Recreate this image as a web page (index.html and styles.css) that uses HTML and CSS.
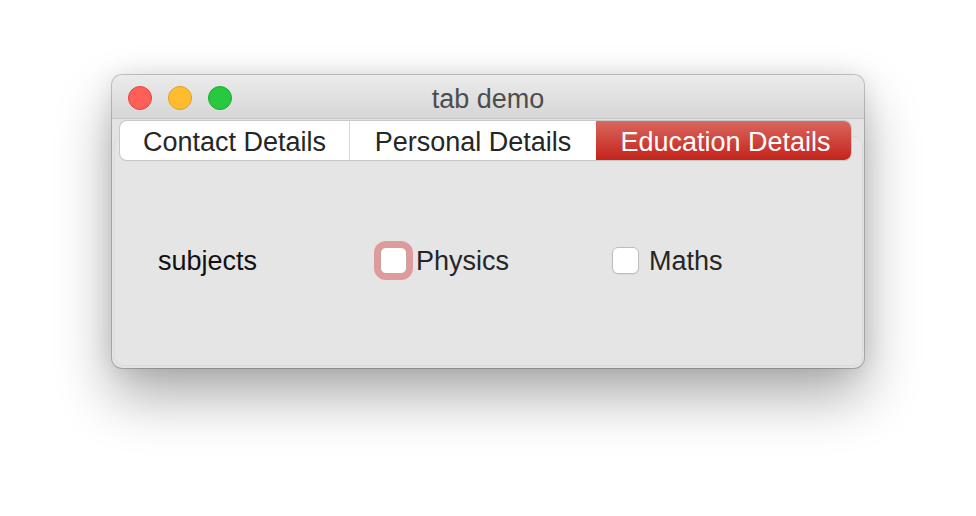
FILE: index.html
```html
<!DOCTYPE html>
<html>
<head>
<meta charset="utf-8">
<link rel="stylesheet" href="styles.css">
</head>
<body>
<div class="window">
  <div class="titlebar">
    <div class="lights">
      <span class="light red"></span>
      <span class="light yellow"></span>
      <span class="light green"></span>
    </div>
    <div class="title">tab demo</div>
  </div>
  <div class="content">
    <div class="pane"></div>
    <div class="tabs">
      <div class="tab tab-contact">Contact Details</div>
      <div class="tab tab-personal">Personal Details</div>
      <div class="tab tab-education active">Education Details</div>
    </div>
    <div class="row">
      <div class="label">subjects</div>
      <label class="check check-physics"><span class="box focused"></span><span class="text">Physics</span></label>
      <label class="check"><span class="box"></span><span class="text">Maths</span></label>
    </div>
  </div>
</div>
</body>
</html>
```
FILE: styles.css
```css
html, body {
  margin: 0;
  padding: 0;
}
body {
  width: 976px;
  height: 516px;
  background: #ffffff;
  font-family: "Liberation Sans", Arial, sans-serif;
  overflow: hidden;
}
.window {
  position: relative;
  margin: 75px 0 0 112px;
  width: 752px;
  height: 293px;
  border-radius: 10px;
  background: #e3e3e3;
  box-shadow: 0 0 0 1px rgba(0,0,0,0.2), 0 28px 56px rgba(0,0,0,0.33), 0 0 24px rgba(0,0,0,0.1);
  overflow: hidden;
  display: flex;
  flex-direction: column;
}
.titlebar {
  height: 43px;
  border-bottom: 1px solid #c6c6c6;
  background: linear-gradient(#ebebeb, #d6d6d6);
  display: flex;
  align-items: center;
  position: relative;
  flex: none;
}
.lights {
  position: relative;
  z-index: 1;
  display: flex;
  gap: 16px;
  padding-left: 16px;
  margin-top: 2px;
}
.light {
  width: 24px;
  height: 24px;
  border-radius: 50%;
  box-sizing: border-box;
}
.red { background: #fe5f57; border: 1px solid #e0443e; }
.yellow { background: #febc2e; border: 1px solid #dea123; }
.green { background: #28c840; border: 1px solid #1aab29; }
.title {
  position: absolute;
  left: 0;
  right: 0;
  top: 0;
  bottom: 0;
  display: flex;
  align-items: center;
  justify-content: center;
  font-size: 27px;
  color: #4d4d4d;
  padding-top: 5px;
  box-sizing: border-box;
}
.content {
  position: relative;
  flex: 1;
}
.pane {
  position: absolute;
  left: 3px;
  right: 2px;
  top: 18px;
  bottom: 3px;
  border-radius: 8px;
  background: #e5e5e5;
  box-shadow: 0 0 0 1px rgba(0,0,0,0.04);
}
.tabs {
  position: relative;
  display: flex;
  margin: 2px 0 0 8px;
  width: 731px;
  height: 39px;
  box-sizing: border-box;
  border-radius: 7px;
  background: #ffffff;
  box-shadow: 0 0 0 1px #c8c8c8, 0 1px 1px rgba(0,0,0,0.12);
}
.tab {
  display: flex;
  align-items: center;
  justify-content: center;
  font-size: 27px;
  color: #262626;
  box-sizing: border-box;
  padding-top: 4px;
}
.tab-contact { width: 230px; border-right: 1px solid #d8d8d8; }
.tab-personal { width: 246px; }
.tab-education { width: 255px; padding-left: 4px; }
.tab.active {
  color: #ffffff;
  background: linear-gradient(#d9675f, #c4231a);
  border-radius: 0 7px 7px 0;
}
.row {
  position: relative;
  display: flex;
  align-items: center;
  margin-top: 80px;
  padding-left: 46px;
  height: 40px;
}
.label {
  width: 222px;
  font-size: 27px;
  color: #111111;
  padding-top: 2px;
}
.check {
  display: flex;
  align-items: center;
  gap: 10px;
  font-size: 27px;
  color: #262626;
}
.check .text { padding-top: 2px; }
.check-physics { width: 232px; gap: 9px; }
.box {
  width: 27px;
  height: 27px;
  box-sizing: border-box;
  border-radius: 6px;
  background: #ffffff;
  border: 1px solid #bdbdbd;
  box-shadow: 0 1px 1px rgba(0,0,0,0.06);
}
.box.focused {
  border-color: #c9a2a2;
  box-shadow: 0 0 0 6px #df9a9c;
}
```
